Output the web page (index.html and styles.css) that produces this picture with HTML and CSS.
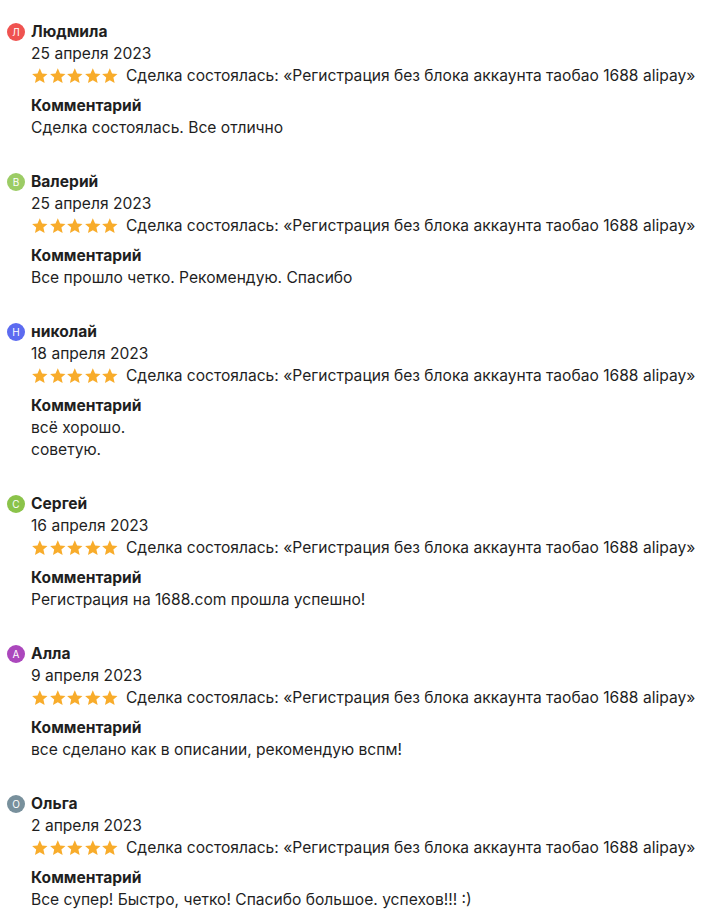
FILE: index.html
```html
<!DOCTYPE html>
<html lang="ru">
<head>
<meta charset="utf-8">
<link rel="stylesheet" href="styles.css">
</head>
<body>
<div class="list">
  <div class="review">
    <div class="avatar red">Л</div>
    <div class="body">
      <div class="name">Людмила</div>
      <div class="line">25 апреля 2023</div>
      <div class="rating"><span class="stars"><svg viewBox="0 0 24 24"><path d="M12 1.8l3.1 6.9 7.4.7-5.6 5 1.7 7.4L12 18l-6.6 3.8 1.7-7.4-5.6-5 7.4-.7z"/></svg><svg viewBox="0 0 24 24"><path d="M12 1.8l3.1 6.9 7.4.7-5.6 5 1.7 7.4L12 18l-6.6 3.8 1.7-7.4-5.6-5 7.4-.7z"/></svg><svg viewBox="0 0 24 24"><path d="M12 1.8l3.1 6.9 7.4.7-5.6 5 1.7 7.4L12 18l-6.6 3.8 1.7-7.4-5.6-5 7.4-.7z"/></svg><svg viewBox="0 0 24 24"><path d="M12 1.8l3.1 6.9 7.4.7-5.6 5 1.7 7.4L12 18l-6.6 3.8 1.7-7.4-5.6-5 7.4-.7z"/></svg><svg viewBox="0 0 24 24"><path d="M12 1.8l3.1 6.9 7.4.7-5.6 5 1.7 7.4L12 18l-6.6 3.8 1.7-7.4-5.6-5 7.4-.7z"/></svg></span>Сделка состоялась: «Регистрация без блока аккаунта таобао 1688 alipay»</div>
      <div class="label">Комментарий</div>
      <div class="line">Сделка состоялась. Все отлично</div>
    </div>
  </div>
  <div class="review">
    <div class="avatar green">В</div>
    <div class="body">
      <div class="name">Валерий</div>
      <div class="line">25 апреля 2023</div>
      <div class="rating"><span class="stars"><svg viewBox="0 0 24 24"><path d="M12 1.8l3.1 6.9 7.4.7-5.6 5 1.7 7.4L12 18l-6.6 3.8 1.7-7.4-5.6-5 7.4-.7z"/></svg><svg viewBox="0 0 24 24"><path d="M12 1.8l3.1 6.9 7.4.7-5.6 5 1.7 7.4L12 18l-6.6 3.8 1.7-7.4-5.6-5 7.4-.7z"/></svg><svg viewBox="0 0 24 24"><path d="M12 1.8l3.1 6.9 7.4.7-5.6 5 1.7 7.4L12 18l-6.6 3.8 1.7-7.4-5.6-5 7.4-.7z"/></svg><svg viewBox="0 0 24 24"><path d="M12 1.8l3.1 6.9 7.4.7-5.6 5 1.7 7.4L12 18l-6.6 3.8 1.7-7.4-5.6-5 7.4-.7z"/></svg><svg viewBox="0 0 24 24"><path d="M12 1.8l3.1 6.9 7.4.7-5.6 5 1.7 7.4L12 18l-6.6 3.8 1.7-7.4-5.6-5 7.4-.7z"/></svg></span>Сделка состоялась: «Регистрация без блока аккаунта таобао 1688 alipay»</div>
      <div class="label">Комментарий</div>
      <div class="line">Все прошло четко. Рекомендую. Спасибо</div>
    </div>
  </div>
  <div class="review">
    <div class="avatar blue">Н</div>
    <div class="body">
      <div class="name">николай</div>
      <div class="line">18 апреля 2023</div>
      <div class="rating"><span class="stars"><svg viewBox="0 0 24 24"><path d="M12 1.8l3.1 6.9 7.4.7-5.6 5 1.7 7.4L12 18l-6.6 3.8 1.7-7.4-5.6-5 7.4-.7z"/></svg><svg viewBox="0 0 24 24"><path d="M12 1.8l3.1 6.9 7.4.7-5.6 5 1.7 7.4L12 18l-6.6 3.8 1.7-7.4-5.6-5 7.4-.7z"/></svg><svg viewBox="0 0 24 24"><path d="M12 1.8l3.1 6.9 7.4.7-5.6 5 1.7 7.4L12 18l-6.6 3.8 1.7-7.4-5.6-5 7.4-.7z"/></svg><svg viewBox="0 0 24 24"><path d="M12 1.8l3.1 6.9 7.4.7-5.6 5 1.7 7.4L12 18l-6.6 3.8 1.7-7.4-5.6-5 7.4-.7z"/></svg><svg viewBox="0 0 24 24"><path d="M12 1.8l3.1 6.9 7.4.7-5.6 5 1.7 7.4L12 18l-6.6 3.8 1.7-7.4-5.6-5 7.4-.7z"/></svg></span>Сделка состоялась: «Регистрация без блока аккаунта таобао 1688 alipay»</div>
      <div class="label">Комментарий</div>
      <div class="line">всё хорошо.<br>советую.</div>
    </div>
  </div>
  <div class="review">
    <div class="avatar lime">С</div>
    <div class="body">
      <div class="name">Сергей</div>
      <div class="line">16 апреля 2023</div>
      <div class="rating"><span class="stars"><svg viewBox="0 0 24 24"><path d="M12 1.8l3.1 6.9 7.4.7-5.6 5 1.7 7.4L12 18l-6.6 3.8 1.7-7.4-5.6-5 7.4-.7z"/></svg><svg viewBox="0 0 24 24"><path d="M12 1.8l3.1 6.9 7.4.7-5.6 5 1.7 7.4L12 18l-6.6 3.8 1.7-7.4-5.6-5 7.4-.7z"/></svg><svg viewBox="0 0 24 24"><path d="M12 1.8l3.1 6.9 7.4.7-5.6 5 1.7 7.4L12 18l-6.6 3.8 1.7-7.4-5.6-5 7.4-.7z"/></svg><svg viewBox="0 0 24 24"><path d="M12 1.8l3.1 6.9 7.4.7-5.6 5 1.7 7.4L12 18l-6.6 3.8 1.7-7.4-5.6-5 7.4-.7z"/></svg><svg viewBox="0 0 24 24"><path d="M12 1.8l3.1 6.9 7.4.7-5.6 5 1.7 7.4L12 18l-6.6 3.8 1.7-7.4-5.6-5 7.4-.7z"/></svg></span>Сделка состоялась: «Регистрация без блока аккаунта таобао 1688 alipay»</div>
      <div class="label">Комментарий</div>
      <div class="line">Регистрация на 1688.com прошла успешно!</div>
    </div>
  </div>
  <div class="review">
    <div class="avatar purple">А</div>
    <div class="body">
      <div class="name">Алла</div>
      <div class="line">9 апреля 2023</div>
      <div class="rating"><span class="stars"><svg viewBox="0 0 24 24"><path d="M12 1.8l3.1 6.9 7.4.7-5.6 5 1.7 7.4L12 18l-6.6 3.8 1.7-7.4-5.6-5 7.4-.7z"/></svg><svg viewBox="0 0 24 24"><path d="M12 1.8l3.1 6.9 7.4.7-5.6 5 1.7 7.4L12 18l-6.6 3.8 1.7-7.4-5.6-5 7.4-.7z"/></svg><svg viewBox="0 0 24 24"><path d="M12 1.8l3.1 6.9 7.4.7-5.6 5 1.7 7.4L12 18l-6.6 3.8 1.7-7.4-5.6-5 7.4-.7z"/></svg><svg viewBox="0 0 24 24"><path d="M12 1.8l3.1 6.9 7.4.7-5.6 5 1.7 7.4L12 18l-6.6 3.8 1.7-7.4-5.6-5 7.4-.7z"/></svg><svg viewBox="0 0 24 24"><path d="M12 1.8l3.1 6.9 7.4.7-5.6 5 1.7 7.4L12 18l-6.6 3.8 1.7-7.4-5.6-5 7.4-.7z"/></svg></span>Сделка состоялась: «Регистрация без блока аккаунта таобао 1688 alipay»</div>
      <div class="label">Комментарий</div>
      <div class="line">все сделано как в описании, рекомендую вспм!</div>
    </div>
  </div>
  <div class="review">
    <div class="avatar grey">О</div>
    <div class="body">
      <div class="name">Ольга</div>
      <div class="line">2 апреля 2023</div>
      <div class="rating"><span class="stars"><svg viewBox="0 0 24 24"><path d="M12 1.8l3.1 6.9 7.4.7-5.6 5 1.7 7.4L12 18l-6.6 3.8 1.7-7.4-5.6-5 7.4-.7z"/></svg><svg viewBox="0 0 24 24"><path d="M12 1.8l3.1 6.9 7.4.7-5.6 5 1.7 7.4L12 18l-6.6 3.8 1.7-7.4-5.6-5 7.4-.7z"/></svg><svg viewBox="0 0 24 24"><path d="M12 1.8l3.1 6.9 7.4.7-5.6 5 1.7 7.4L12 18l-6.6 3.8 1.7-7.4-5.6-5 7.4-.7z"/></svg><svg viewBox="0 0 24 24"><path d="M12 1.8l3.1 6.9 7.4.7-5.6 5 1.7 7.4L12 18l-6.6 3.8 1.7-7.4-5.6-5 7.4-.7z"/></svg><svg viewBox="0 0 24 24"><path d="M12 1.8l3.1 6.9 7.4.7-5.6 5 1.7 7.4L12 18l-6.6 3.8 1.7-7.4-5.6-5 7.4-.7z"/></svg></span>Сделка состоялась: «Регистрация без блока аккаунта таобао 1688 alipay»</div>
      <div class="label">Комментарий</div>
      <div class="line">Все супер! Быстро, четко! Спасибо большое. успехов!!! :)</div>
    </div>
  </div>
</div>
</body>
</html>
```

FILE: styles.css
```css
html, body {
  margin: 0;
  padding: 0;
  background: #ffffff;
}
body {
  font-family: Inter, "Noto Sans", sans-serif;
  font-size: 15.6px;
  line-height: 22px;
  color: #1f1f1f;
}
.list {
  display: flex;
  flex-direction: column;
  gap: 32px;
  padding: 21px 0 0 7px;
}
.review {
  display: flex;
  align-items: flex-start;
  gap: 6px;
}
.avatar {
  flex: none;
  width: 18px;
  height: 18px;
  margin-top: 2px;
  border-radius: 50%;
  color: #fff;
  font-size: 10px;
  line-height: 18px;
  text-align: center;
}
.red { background: #ef5350; }
.green { background: #9ccc65; }
.blue { background: #5c6bf0; }
.lime { background: #8bc34a; }
.purple { background: #ab47bc; }
.grey { background: #78909c; }
.body {
  display: flex;
  flex-direction: column;
}
.name {
  font-weight: 700;
}
.rating {
  display: flex;
  align-items: center;
  white-space: nowrap;
}
.stars {
  display: flex;
  margin-right: 7px;
}
.stars svg {
  width: 17.6px;
  height: 17.6px;
  fill: #f8ac2b;
}
.label {
  margin-top: 8px;
  font-weight: 700;
}
```
